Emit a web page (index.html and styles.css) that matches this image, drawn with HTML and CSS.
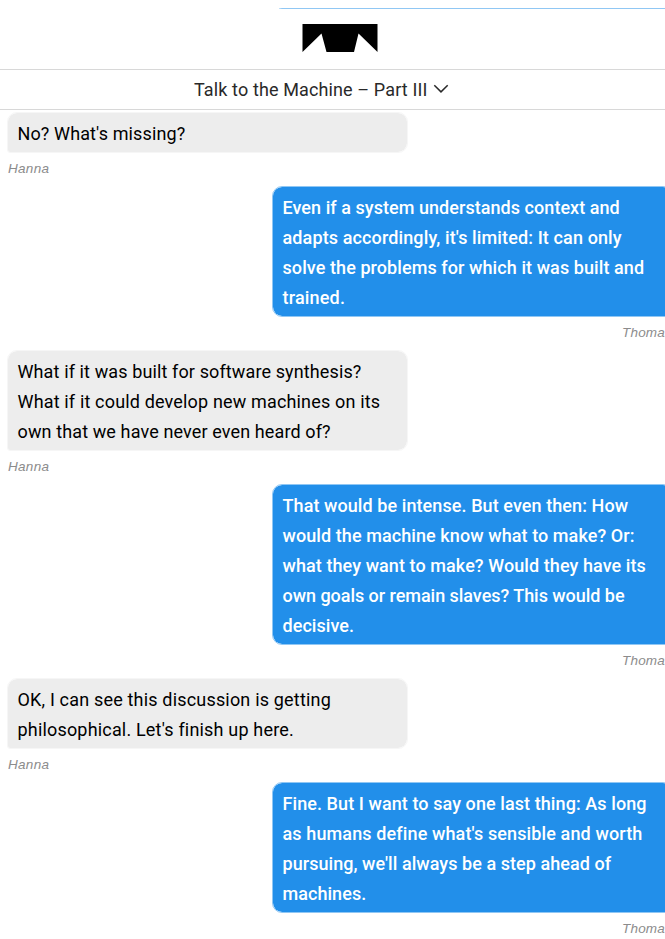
FILE: index.html
```html
<!DOCTYPE html>
<html lang="en">
<head>
<meta charset="utf-8">
<title>Talk to the Machine – Part III</title>
<link rel="stylesheet" href="styles.css">
</head>
<body>
<div class="page">
  <header class="header">
    <div class="brand">
      <svg class="logo" width="76" height="28" viewBox="0 0 76 28" aria-hidden="true"><path d="M.5 0H75.5V28L56.500 9.500 52 28H24.500L19.500 9.500.5 28Z"/></svg>
    </div>
    <nav class="chapter">
      <span class="chapter-title">Talk to the Machine – Part III</span>
      <svg class="chevron" width="16" height="10" viewBox="0 0 16 10" aria-hidden="true"><path d="M1.300 1.200 8 7.900 14.700 1.200"/></svg>
    </nav>
  </header>
  <main class="chat">
    <section class="message">
      <p class="bubble"><span>No? What's missing?</span></p>
      <div class="author">Hanna</div>
    </section>
    <section class="message own">
      <p class="bubble"><span class="snug">Even if a system understands context and</span><span>adapts accordingly, it's limited: It can only</span><span class="close">solve the problems for which it was built and</span><span class="wide">trained.</span></p>
      <div class="author">Thomas</div>
    </section>
    <section class="message">
      <p class="bubble"><span>What if it was built for software synthesis?</span><span class="loose">What if it could develop new machines on its</span><span>own that we have never even heard of?</span></p>
      <div class="author">Hanna</div>
    </section>
    <section class="message own">
      <p class="bubble"><span class="close">That would be intense. But even then: How</span><span class="close">would the machine know what to make? Or:</span><span class="close">what they want to make? Would they have its</span><span class="tight">own goals or remain slaves? This would be</span><span class="snug">decisive.</span></p>
      <div class="author">Thomas</div>
    </section>
    <section class="message">
      <p class="bubble"><span class="wide">OK, I can see this discussion is getting</span><span class="wide">philosophical. Let's finish up here.</span></p>
      <div class="author">Hanna</div>
    </section>
    <section class="message own">
      <p class="bubble"><span class="close">Fine. But I want to say one last thing: As long</span><span>as humans define what's sensible and worth</span><span class="snug">pursuing, we'll always be a step ahead of</span><span class="snug">machines.</span></p>
      <div class="author">Thomas</div>
    </section>
  </main>
</div>
</body>
</html>
```
FILE: styles.css
```css
* { box-sizing: border-box; }
body { margin: 0; background: #fff; color: #000; font-family: Roboto, "Liberation Sans", sans-serif; }
.page { width: 665px; height: 939px; overflow: hidden; }
.header { height: 110px; padding-top: 8px; border-bottom: 1px solid #d8d8d8; }
.brand { height: 62px; border-bottom: 1px solid #d8d8d8; padding: 15px 0 0 302px; }
.brand::before { content: ""; display: block; height: 1px; margin: -15px 0 15px -23px; background: linear-gradient(90deg, #c8e3fa, #90c7f4 3px); }
.logo { display: block; }
.chapter { height: 39px; display: flex; align-items: center; padding-left: 194px; gap: 6px; }
.chapter-title { font-size: 18px; line-height: 39px; color: #292929; letter-spacing: .12px; white-space: nowrap; }
.chevron { fill: none; stroke: #292929; stroke-width: 1.5; margin-top: -2px; }
.chat { padding: 2px 0 0 7px; }
.message { width: 401px; }
.message.own { margin-left: 265px; }
.bubble { margin: 0; padding: 6px 9px 3px 9.5px; border: 1px solid #f6f6f6; border-radius: 10px 10px 10px 3px; background: #ededed; background-clip: padding-box; font-size: 18px; line-height: 30px; letter-spacing: .12px; }
.bubble span { display: block; white-space: nowrap; }
.bubble .wide { letter-spacing: .18px; }
.bubble .loose { letter-spacing: .16px; }
.bubble .close { letter-spacing: .08px; }
.bubble .snug { letter-spacing: .05px; }
.bubble .tight { letter-spacing: -.04px; }
.own .bubble { color: #fff; background-color: #228fea; border-color: #90c7f4; border-radius: 10px 10px 3px 10px; font-weight: 500; }
.author { height: 33px; padding-left: 1px; font-family: "Liberation Sans", sans-serif; font-size: 13.5px; font-style: italic; line-height: 31px; color: #8c8c8c; letter-spacing: .3px; }
.own .author { padding-left: 350px; white-space: nowrap; letter-spacing: .2px; }
```
